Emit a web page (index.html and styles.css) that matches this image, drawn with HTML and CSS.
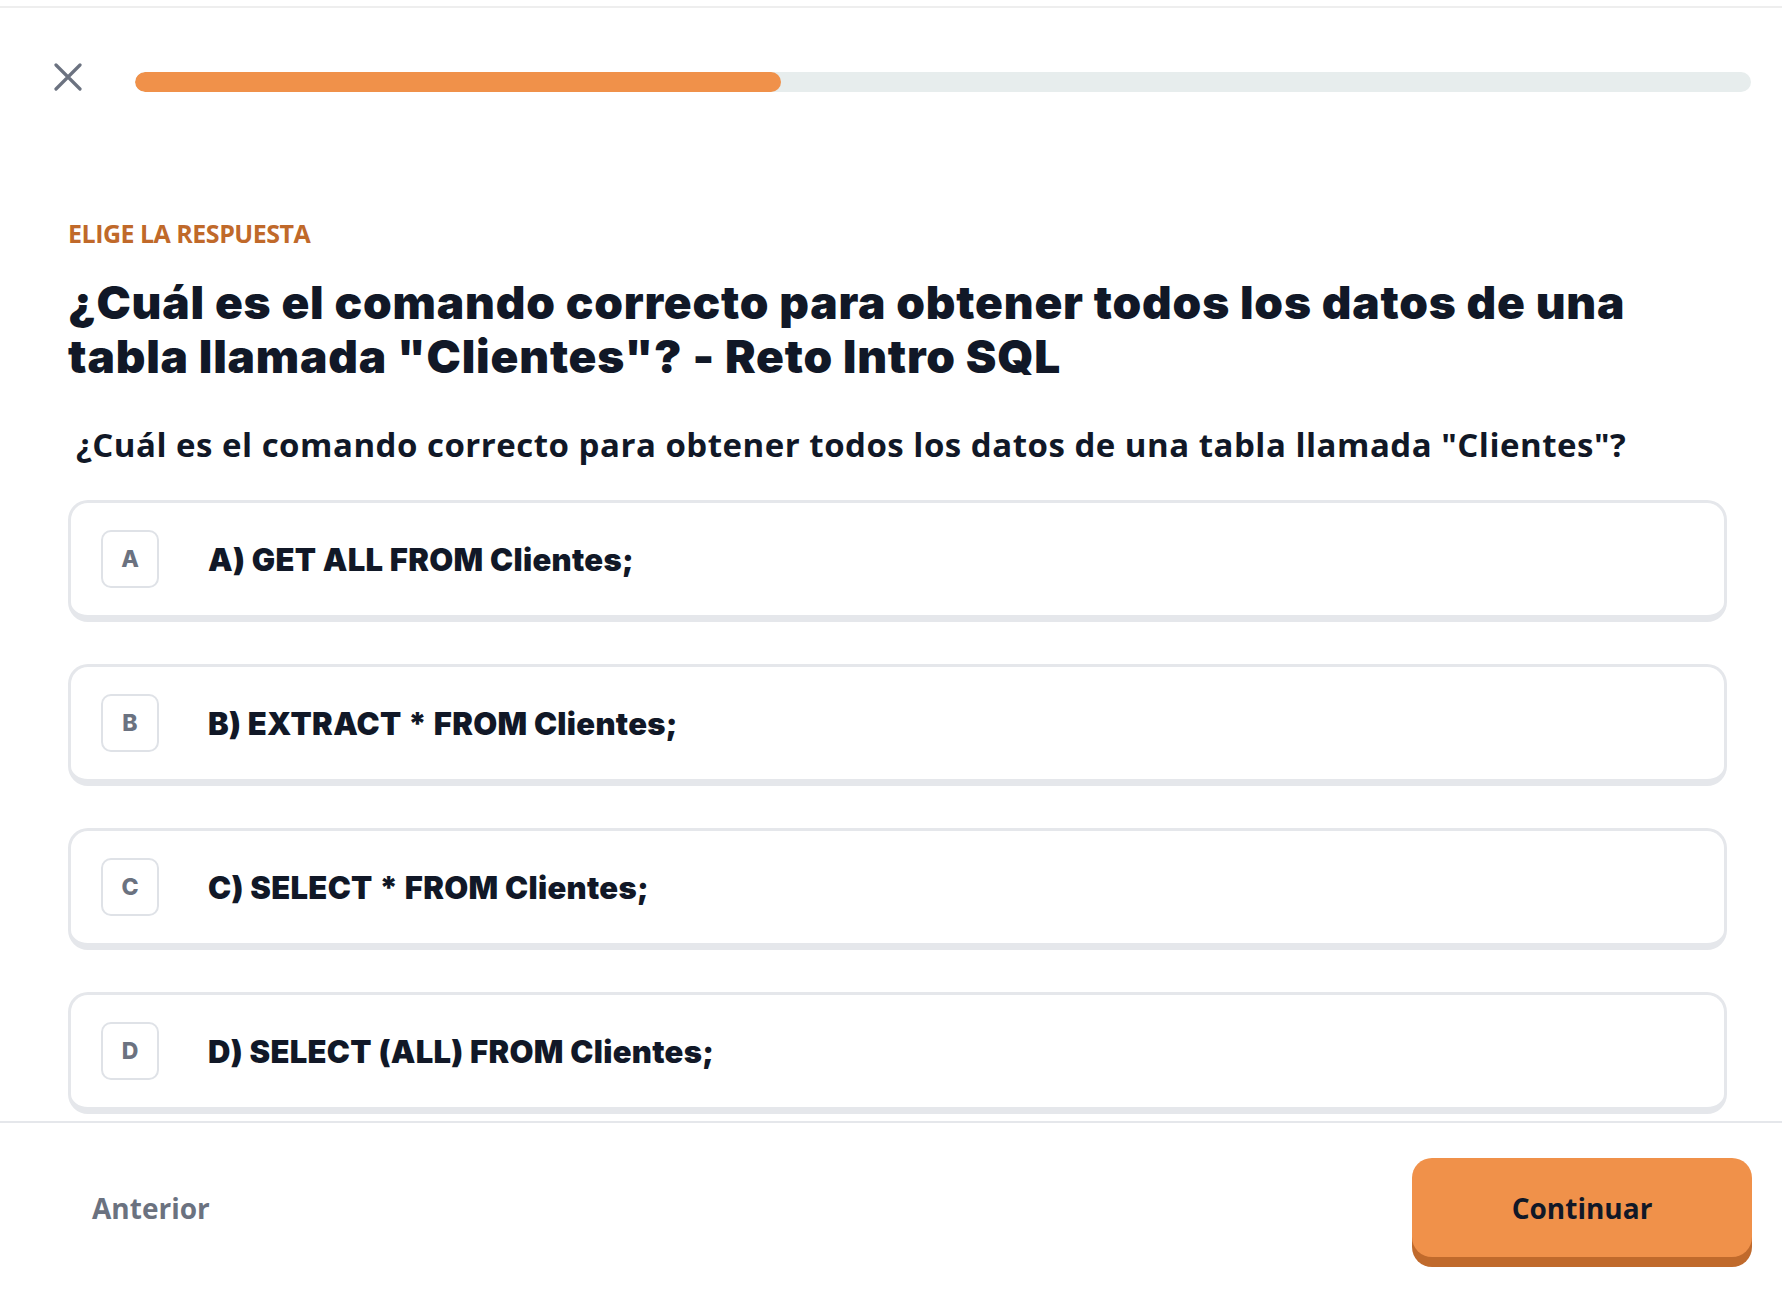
FILE: index.html
```html
<!DOCTYPE html>
<html lang="es">
<head>
    <meta charset="UTF-8">
    <meta name="viewport" content="width=device-width, initial-scale=1.0">
    <title>Reto Intro SQL</title>
    <link rel="stylesheet" href="styles.css">
</head>
<body>
    <header class="quiz-header">
        <button class="close-btn" aria-label="Cerrar">
            <svg width="28" height="28" viewBox="0 0 28 28" fill="none">
                <path d="M2 2 L26 26 M26 2 L2 26" stroke="#6b7280" stroke-width="3.2" stroke-linecap="round"/>
            </svg>
        </button>
        <div class="progress-track">
            <div class="progress-fill" style="width: 40%"></div>
        </div>
    </header>

    <main class="quiz-body">
        <p class="eyebrow">Elige la respuesta</p>
        <h1 class="question-title">¿Cuál es el comando correcto para obtener todos los datos de una tabla llamada "Clientes"? - Reto Intro SQL</h1>
        <p class="question-text">¿Cuál es el comando correcto para obtener todos los datos de una tabla llamada "Clientes"?</p>

        <div class="options">
            <button class="option">
                <span class="option-key">A</span>
                <span class="option-label">A) GET ALL FROM Clientes;</span>
            </button>
            <button class="option">
                <span class="option-key">B</span>
                <span class="option-label">B) EXTRACT * FROM Clientes;</span>
            </button>
            <button class="option">
                <span class="option-key">C</span>
                <span class="option-label">C) SELECT * FROM Clientes;</span>
            </button>
            <button class="option">
                <span class="option-key">D</span>
                <span class="option-label">D) SELECT (ALL) FROM Clientes;</span>
            </button>
        </div>
    </main>

    <footer class="quiz-footer">
        <button class="prev-btn">Anterior</button>
        <button class="next-btn">Continuar</button>
    </footer>
</body>
</html>
```

FILE: styles.css
```css
* {
    box-sizing: border-box;
}

html, body {
    height: 100%;
}

body {
    margin: 0;
    padding-top: 6px;
    background: #fff;
    font-family: 'Open Sans', 'Noto Sans', sans-serif;
    color: #111827;
    display: flex;
    flex-direction: column;
    height: 100vh;
    overflow: hidden;
}

button {
    font-family: inherit;
    border: none;
    background: none;
    cursor: pointer;
    padding: 0;
}

.quiz-header {
    border-top: 2px solid #eeeeee;
    display: flex;
    align-items: flex-start;
    gap: 53px;
    padding: 55px 31px 0 54px;
    flex-shrink: 0;
}

.close-btn {
    width: 28px;
    height: 28px;
    display: flex;
}

.progress-track {
    flex: 1;
    height: 20px;
    margin-top: 9px;
    background: #e7eded;
    border-radius: 10px;
    overflow: hidden;
}

.progress-fill {
    height: 100%;
    background: #f0914a;
    border-radius: 10px;
}

.quiz-body {
    flex: 1;
    min-height: 0;
    overflow: hidden;
    padding: 124px 55px 0 68px;
}

.eyebrow {
    margin: 0;
    font-size: 25px;
    line-height: 34px;
    font-weight: 700;
    text-transform: uppercase;
    color: #c0692a;
    letter-spacing: -0.5px;
}

.question-title {
    max-width: 1600px;
    margin: 25px 0 0;
    font-family: 'Inter', sans-serif;
    font-weight: 900;
    font-size: 46px;
    line-height: 54px;
    letter-spacing: 0.8px;
    color: #111827;
}

.question-text {
    margin: 42px 0 0;
    padding-left: 8px;
    font-size: 33px;
    line-height: 40px;
    font-weight: 700;
    letter-spacing: 0.5px;
}

.options {
    margin-top: 35px;
    display: flex;
    flex-direction: column;
    gap: 42px;
}

.option {
    display: flex;
    align-items: center;
    gap: 49px;
    height: 122px;
    padding: 0 30px;
    border: 3px solid #e5e7eb;
    border-bottom-width: 7px;
    border-radius: 20px;
    background: #fff;
    text-align: left;
}

.option-key {
    width: 58px;
    height: 58px;
    flex-shrink: 0;
    display: flex;
    align-items: center;
    justify-content: center;
    border: 2px solid #dfe2e7;
    border-radius: 10px;
    font-family: 'Inter', sans-serif;
    font-weight: 800;
    font-size: 23px;
    color: #6b7280;
}

.option-label {
    font-family: 'Inter', sans-serif;
    font-weight: 900;
    font-size: 31px;
    letter-spacing: 0.3px;
    color: #111827;
}

.quiz-footer {
    flex-shrink: 0;
    height: 173px;
    border-top: 2px solid #e5e7eb;
    display: flex;
    justify-content: space-between;
    align-items: flex-start;
    padding: 35px 30px 0 68px;
}

.prev-btn {
    height: 99px;
    padding: 0 24px;
    font-size: 28px;
    font-weight: 700;
    color: #6b7280;
}

.next-btn {
    width: 340px;
    height: 99px;
    border-radius: 20px;
    background: #f0914a;
    box-shadow: 0 10px 0 #c06a2c;
    font-size: 28px;
    font-weight: 700;
    color: #111827;
}
```
